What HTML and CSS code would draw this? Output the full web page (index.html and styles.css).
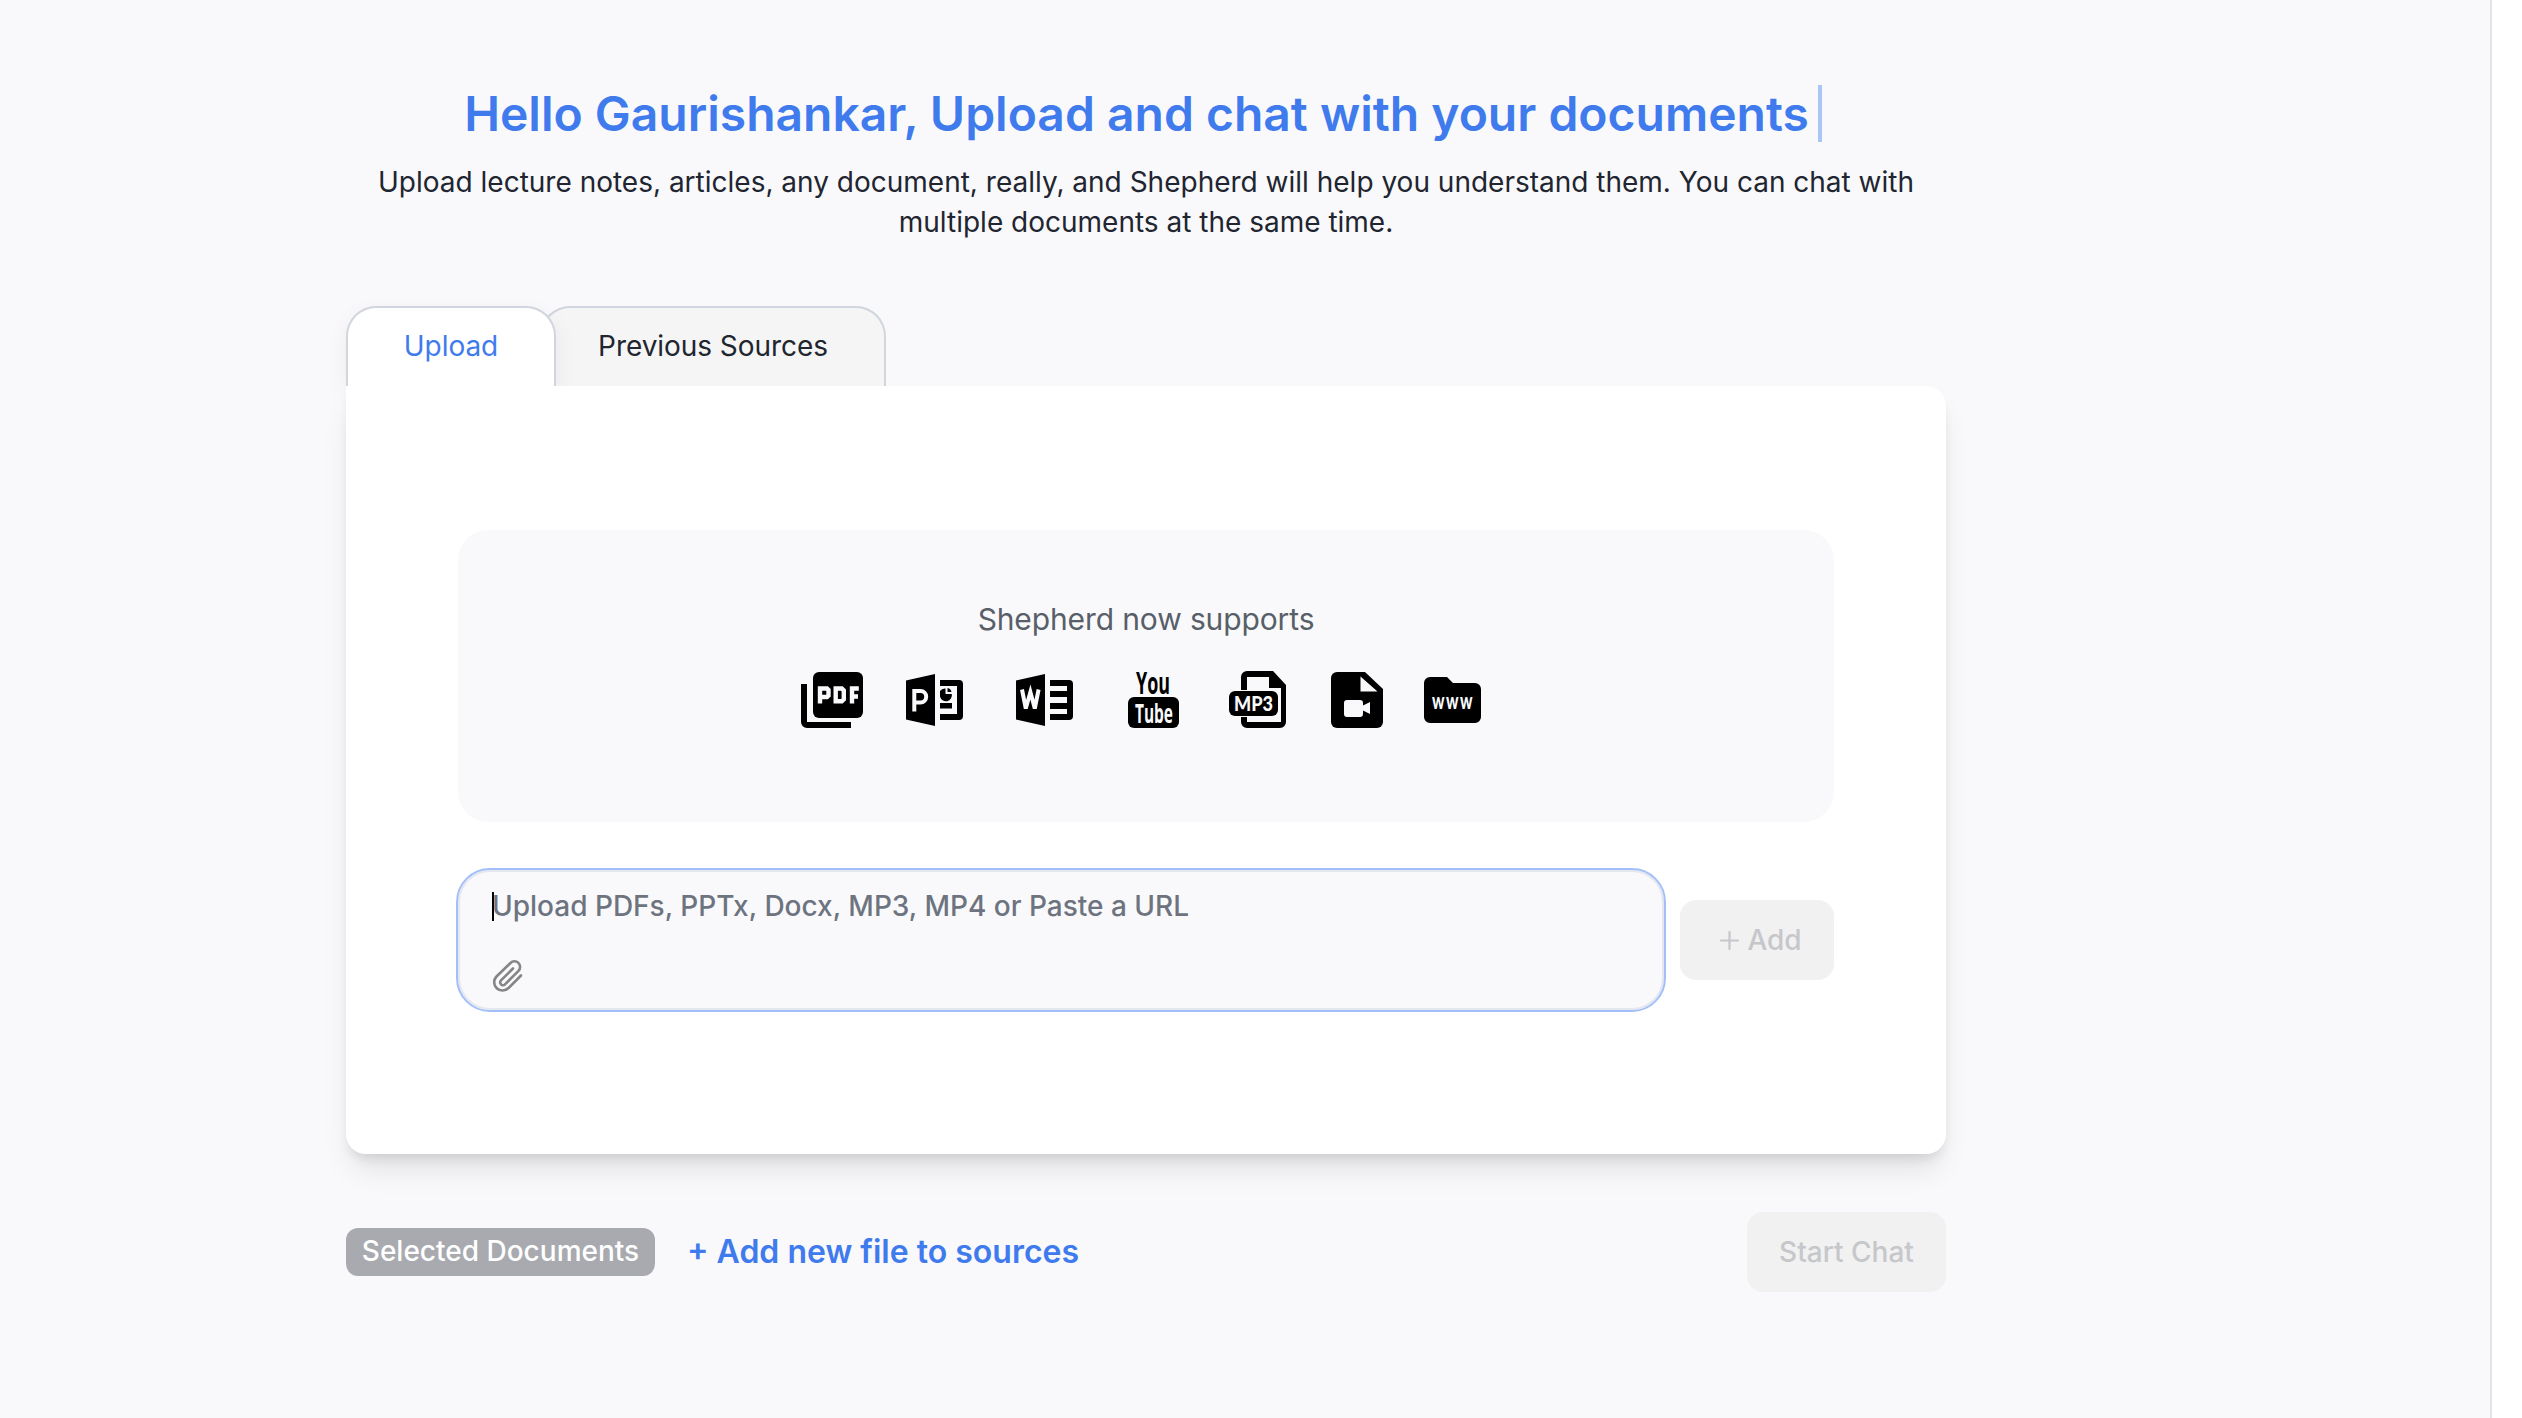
FILE: index.html
```html
<!DOCTYPE html>
<html lang="en">
<head>
<meta charset="utf-8">
<title>Shepherd – Chat with your documents</title>
<link rel="stylesheet" href="styles.css">
</head>
<body>
<div class="page">
<main class="content">
  <header class="intro">
    <h1 class="title"><span>Hello Gaurishankar, Upload and chat with your documents</span><span class="cursor"></span></h1>
    <p class="subtitle">Upload lecture notes, articles, any document, really, and Shepherd will help you understand them. You can chat with<br>multiple documents at the same time.</p>
  </header>
  <nav class="tabs">
    <button class="tab tab-active">Upload</button>
    <button class="tab tab-rest">Previous Sources</button>
  </nav>
  <section class="card">
    <div class="supports">
      <p class="supports-text">Shepherd now supports</p>
      <div class="icons">
        <svg class="icon" width="64" height="58" viewBox="0 0 64 58"><path d="M1 13h6v38h44v6H7a6 6 0 0 1-6-6z"/><rect x="13" y="1" width="50" height="46" rx="6"/><g fill="none" stroke="#f9f9fb" stroke-width="4.400"><path d="M20 32.500V17.500h7l1.500 1.500v5.500L27 26h-7M35.700 17.500v12.800h6.100l2-2v-8.800l-2-2zM52 32.500v-15h6.800M52 25.500h6"/></g></svg>
        <svg class="icon icon-ppt" width="57" height="52" viewBox="0 0 57 52"><path d="M0 6.500 29 0v52L0 45.500zM34 6h19a4 4 0 0 1 4 4v32a4 4 0 0 1-4 4H34v-6h17V12H34z"/><path d="M39.500 14.500V20h6.300a6 6 0 0 1-11.800 2.500v-5.500a6 6 0 0 1 5.500-2.500zM41.500 14a5 5 0 0 1 4 4h-4zM34 29h12v5.500H34z"/><path d="M8.300 37.500V17h6.200a5.700 5.700 0 0 1 0 11.400H9" fill="none" stroke="#f9f9fb" stroke-width="4"/></svg>
        <svg class="icon icon-word" width="57" height="52" viewBox="0 0 57 52"><path d="M0 6.500 29 0v52L0 45.500zM34 6h19a4 4 0 0 1 4 4v32a4 4 0 0 1-4 4H34v-6h17v-5H34v-6h17v-6H34v-6h17v-5H34z"/><path d="m6 15.500 3.800 19 4.600-16.500 4.400 16.500 3.800-19" fill="none" stroke="#f9f9fb" stroke-width="4"/></svg>
        <svg class="icon icon-youtube" width="51" height="58" viewBox="0 0 51 58"><rect y="26" width="51" height="31" rx="6"/><g class="narrow"><text x="8" y="23" font-size="31" textLength="34" lengthAdjust="spacingAndGlyphs">You</text><text x="7" y="51.500" font-size="27" textLength="38" lengthAdjust="spacingAndGlyphs" fill="#f9f9fb">Tube</text></g></svg>
        <svg class="icon icon-mp3" width="58" height="58" viewBox="0 0 58 58"><path d="M18 0h26l13 14v37a6 6 0 0 1-6 6H18a6 6 0 0 1-6-6V6a6 6 0 0 1 6-6zm0 6v45h34V17H40V6z"/><rect x="-1" y="19" width="52" height="27" rx="7" fill="#f9f9fb"/><rect y="20" width="49" height="25" rx="6"/><text class="bold" x="5" y="40" font-size="20" textLength="39" lengthAdjust="spacingAndGlyphs" fill="#f9f9fb">MP3</text></svg>
        <svg class="icon icon-video" width="52" height="56" viewBox="0 0 52 56"><path d="M7 0h27l18 17v33a6 6 0 0 1-6 6H6a6 6 0 0 1-6-6V6a6 6 0 0 1 6-6z"/><path d="M29.500 4.500v15h17zM16 28h13a3 3 0 0 1 3 3v2.500l7-3.500v12l-7-3.500v3.500a3 3 0 0 1-3 3H16a3 3 0 0 1-3-3V31a3 3 0 0 1 3-3z" fill="#f9f9fb"/></svg>
        <svg class="icon icon-web" width="57" height="46" viewBox="0 0 57 46"><path d="M6 0h17l6 6h22a6 6 0 0 1 6 6v28a6 6 0 0 1-6 6H6a6 6 0 0 1-6-6V6a6 6 0 0 1 6-6z"/><g class="web-text"><text x="8" y="31.500" textLength="12.500" lengthAdjust="spacingAndGlyphs">w</text><text x="22" y="31.500" textLength="12.500" lengthAdjust="spacingAndGlyphs">w</text><text x="36" y="31.500" textLength="12.500" lengthAdjust="spacingAndGlyphs">w</text></g></svg>
      </div>
    </div>
    <div class="entry">
      <div class="field">
        <div class="placeholder"><span class="caret"></span><span>Upload PDFs, PPTx, Docx, MP3, MP4 or Paste a URL</span></div>
        <svg width="32" height="34" viewBox="0 0 32 34" fill="none" stroke="#858585" stroke-width="2.600" stroke-linecap="round" stroke-linejoin="round"><path d="M29 16.500 16.500 29a8 8 0 0 1-12-11.500L18.500 4a5.500 5.500 0 0 1 8 7.800L13 25.300a2.800 2.800 0 0 1-4-4L21 9.500"/></svg>
      </div>
      <button class="btn add"><svg width="19" height="19" viewBox="0 0 19 19" stroke="#c6c7cb" stroke-width="2.200" stroke-linecap="round"><path d="M9.500 1v17M1 9.500h17"/></svg><span>Add</span></button>
    </div>
  </section>
  <footer class="footer">
    <span class="badge">Selected Documents</span>
    <a class="link">+ Add new file to sources</a>
    <button class="btn start">Start Chat</button>
  </footer>
</main>
<aside class="side"></aside>
</div>
</body>
</html>
```
FILE: styles.css
```css
* { box-sizing: border-box; }
body { margin: 0; background: #f9f9fb; font-family: Inter, "Liberation Sans", sans-serif; color: #212530; font-size: 28px; line-height: 40px; }
button { border: 0; margin: 0; padding: 0; font: inherit; color: inherit; }
.page { display: flex; width: 2522px; height: 1418px; overflow: hidden; }
.content { width: 1600px; margin-left: 346px; padding-top: 82px; }
.side { width: 32px; margin-left: auto; background: #fff; border-left: 2px solid #e4e4e7; }
.intro { height: 224px; text-align: center; }
.title { margin: 0; height: 64px; padding-right: 6px; display: flex; justify-content: center; align-items: center; gap: 9px; font-size: 48px; line-height: 64px; font-weight: 600; color: #407bee; }
.cursor { width: 4px; height: 57px; margin-top: -2px; background: #a9c6f7; }
.subtitle { margin: 16px 0 0; white-space: nowrap; }
.tabs { display: flex; height: 80px; }
.tab { height: 80px; border: 2px solid #d1d5dd; border-bottom: 0; border-radius: 30px 30px 0 0; line-height: 40px; padding-bottom: 3px; letter-spacing: -0.06px; }
.tab-active { width: 210px; background: #fff; color: #407bee; position: relative; z-index: 1; box-shadow: 0 8px 24px rgba(0,0,0,.06); }
.tab-rest { width: 346px; margin-left: -16px; background: #f5f5f5; }
.card { position: relative; z-index: 2; height: 768px; padding: 144px 112px 0; background: #fff; border-radius: 0 20px 20px 20px; box-shadow: 0 20px 30px -6px rgba(0,0,0,.1), 0 8px 12px -4px rgba(0,0,0,.1); clip-path: inset(0 -60px -80px -60px); }
.supports { height: 292px; border-radius: 30px; background: #f9f9fb; padding-top: 69px; text-align: center; color: #585f68; }
.supports-text { margin: 0; font-size: 30px; letter-spacing: -0.12px; }
.icons { display: flex; align-items: center; height: 60px; margin-top: 31px; padding-left: 342px; }
.icon { flex: none; overflow: visible; fill: #000; }
.icon-ppt { margin-left: 42px; }
.icon-word { margin-left: 53px; }
.icon-youtube { margin-left: 55px; }
.icon-mp3 { margin-left: 50px; }
.icon-video { margin-left: 44px; }
.icon-web { margin-left: 41px; }
.narrow { font-family: "Open Sans", sans-serif; font-weight: 700; }
.bold { font-family: Lato, sans-serif; font-weight: 900; }
.web-text { font-family: Lato, sans-serif; font-weight: 900; font-size: 22.5px; fill: #f9f9fb; }
.entry { display: flex; align-items: center; gap: 14px; margin: 46px 0 0 -2px; }
.field { width: 1210px; height: 144px; border: 2px solid #a3bffa; border-radius: 34px; background: #f9f9fb; box-shadow: inset 0 0 0 2px #e4e7ee; padding: 16px 34px; display: flex; flex-direction: column; align-items: flex-start; gap: 33px; }
.placeholder { display: flex; align-items: center; height: 40px; font-weight: 500; color: #6d7480; white-space: nowrap; }
.caret { width: 2px; height: 29px; margin-right: -2px; background: #000; }
.btn { height: 80px; border-radius: 16px; background: #f1f1f1; color: #c6c7cb; font-weight: 500; display: flex; align-items: center; justify-content: center; }
.add { width: 154px; gap: 8px; padding-left: 8px; }
.footer { display: flex; align-items: center; height: 80px; margin-top: 58px; }
.badge { display: flex; align-items: center; justify-content: center; width: 309px; height: 48px; padding-bottom: 2px; border-radius: 12px; background: #a9aab0; color: #fff; font-weight: 500; }
.link { margin-left: 32px; font-size: 32px; font-weight: 600; color: #407bee; }
.start { width: 199px; margin-left: auto; }
```
